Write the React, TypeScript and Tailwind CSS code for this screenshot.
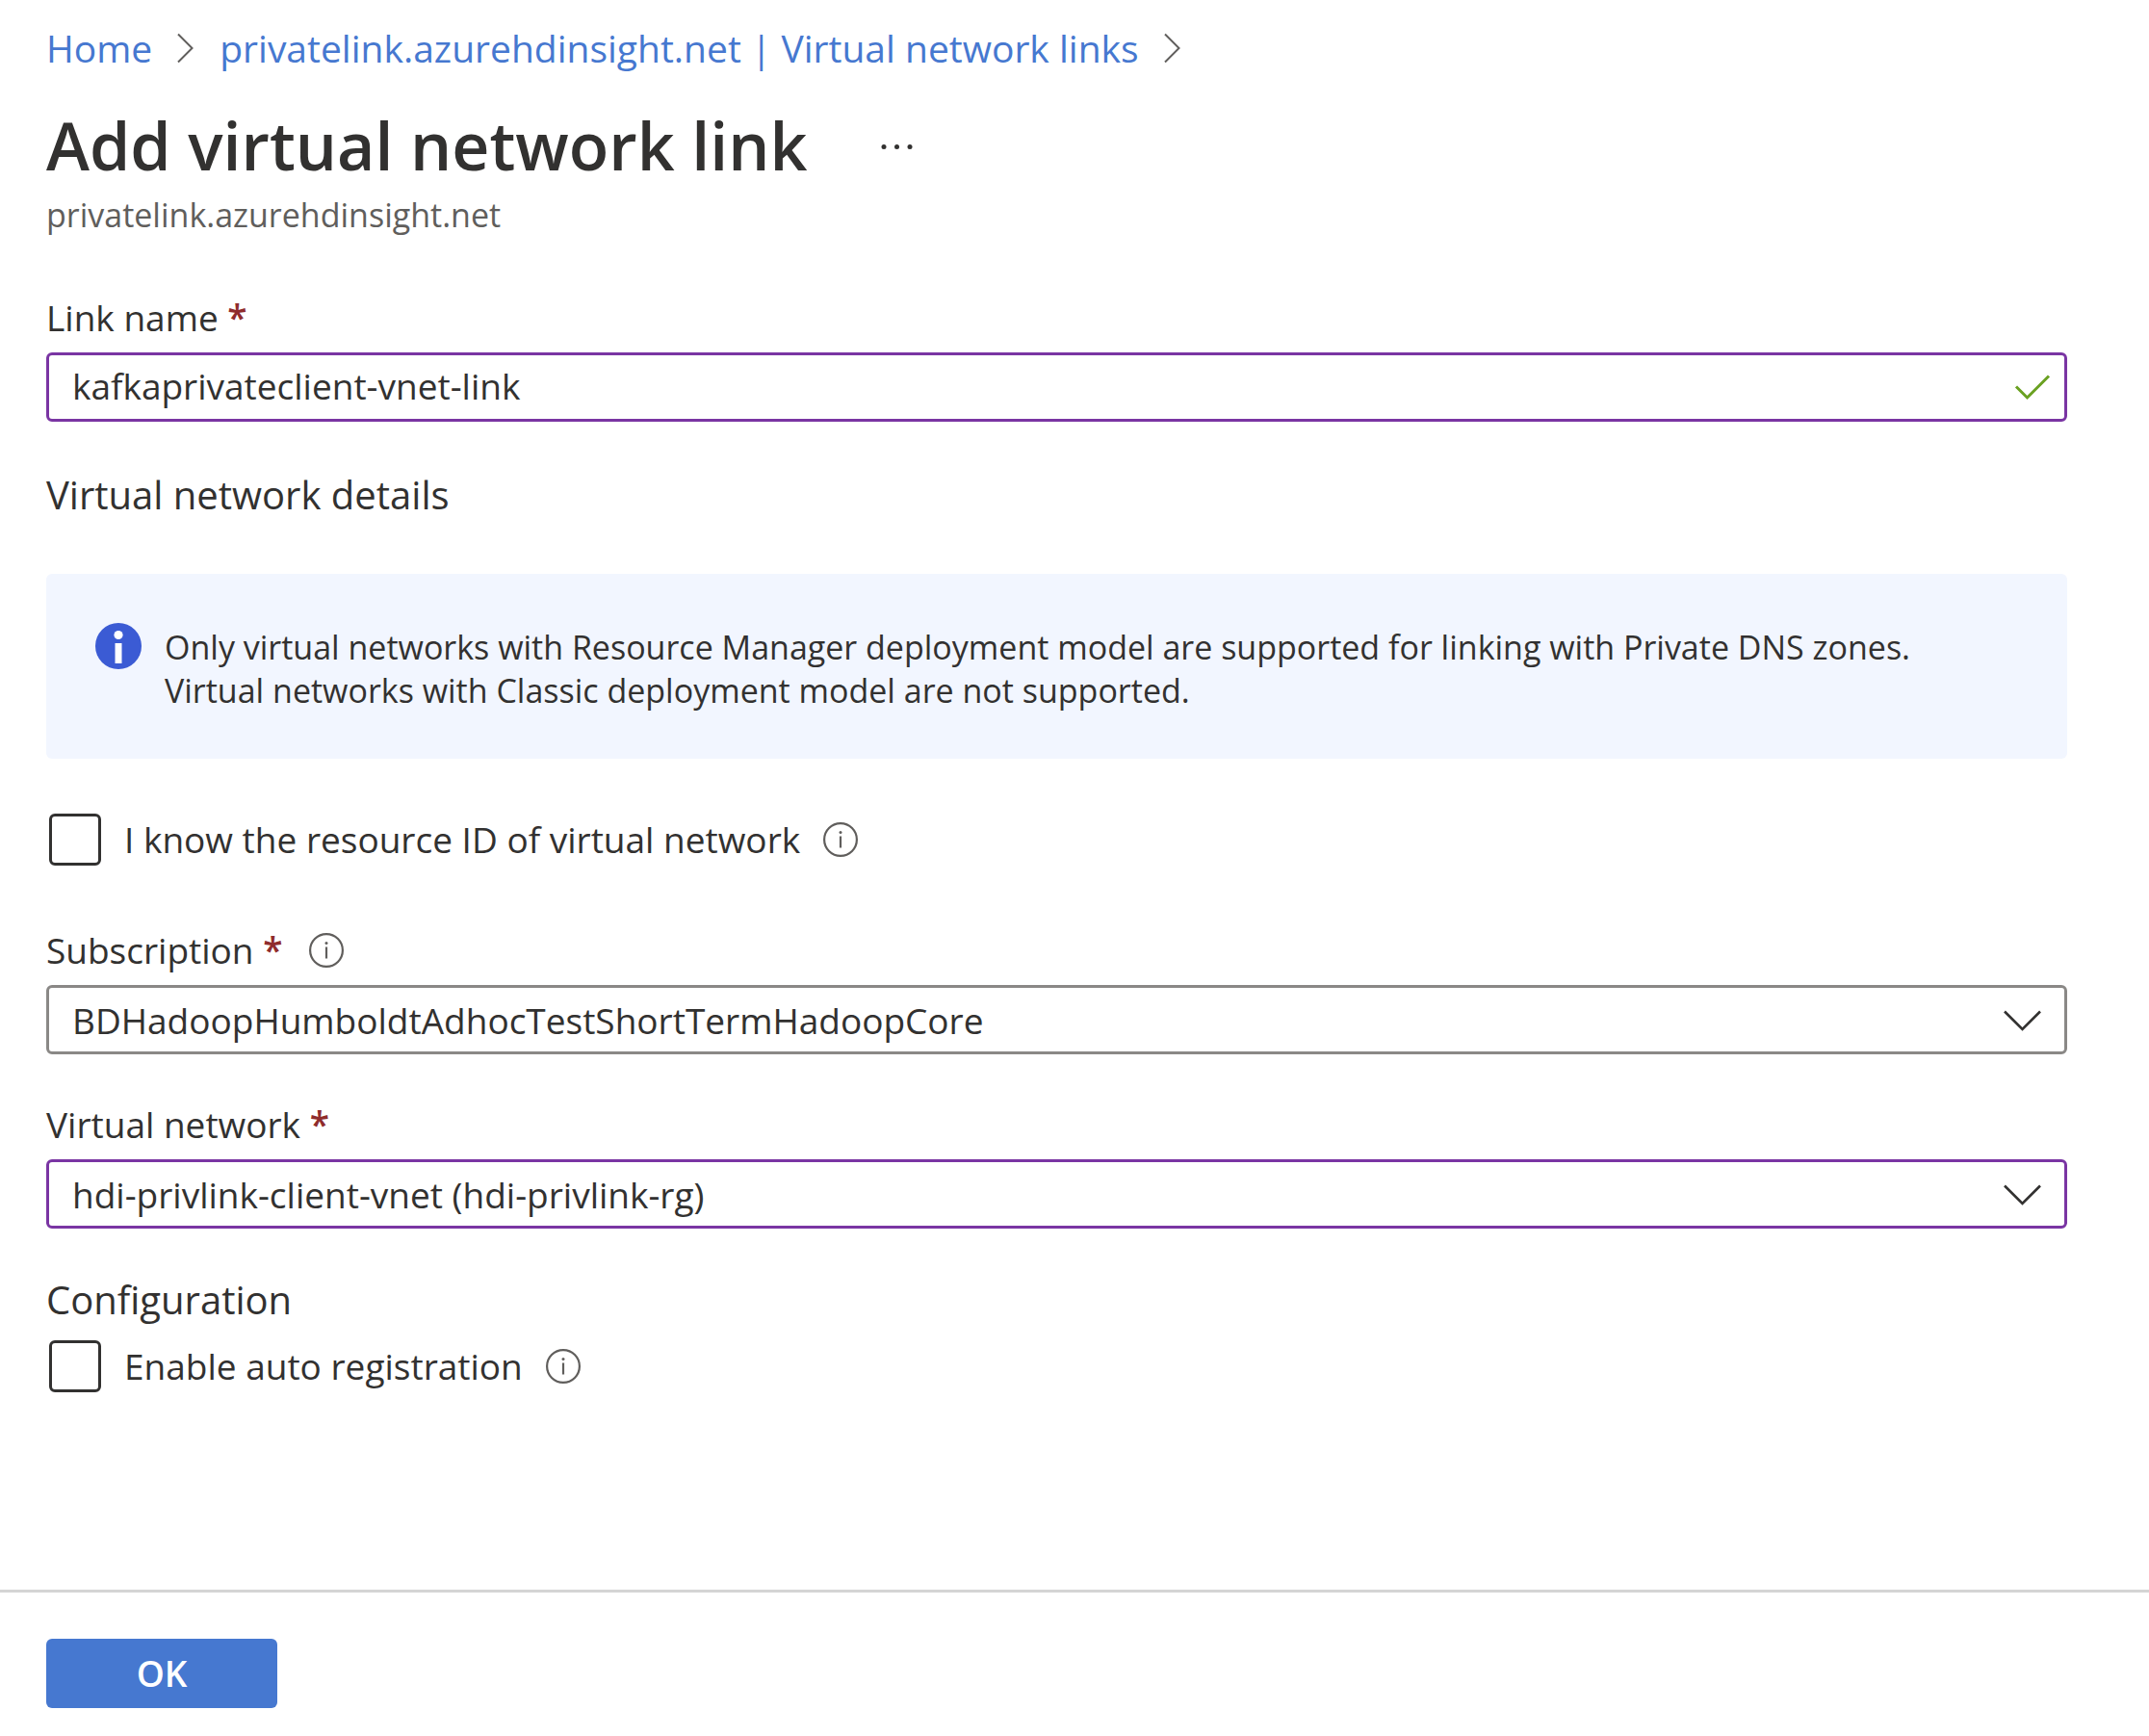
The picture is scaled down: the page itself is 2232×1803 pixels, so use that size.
import React, { useState } from "react";

function Crumb() {
    return (
        <svg className="w-[18px] h-8 shrink-0" viewBox="0 0 18 32" fill="none" stroke="#605e5c" strokeWidth="2">
            <path d="M1 1.5 15.5 16 1 30.5" />
        </svg>
    )
}

function InfoIcon() {
    return (
        <svg className="size-9 shrink-0" viewBox="0 0 36 36" fill="none">
            <circle cx="18" cy="18" r="16.9" stroke="#605e5c" strokeWidth="2.2" />
            <circle cx="18" cy="10.5" r="1.5" fill="#605e5c" />
            <path d="M18 14.5v12" stroke="#605e5c" strokeWidth="2.2" />
        </svg>
    )
}

function Required() {
    return <span className="text-[#8f2c2c] font-semibold">*</span>
}

type SelectFieldProps = {
    id: string;
    label: string;
    value: string;
    border: string;
    info?: boolean;
}

function SelectField({ id, label, value, border, info }: SelectFieldProps) {
    return (
        <div className="flex flex-col gap-3">
            <div className="flex items-center gap-7">
                <label htmlFor={id} className="text-[37px] leading-[48px]">{label} <Required /></label>
                {info && <InfoIcon />}
            </div>
            <div className="relative">
                <select id={id} className={`${border} block w-full h-[72px] appearance-none rounded-md border-3 bg-white pt-0.5 pl-6 pr-24 text-[37px]`}>
                    <option>{value}</option>
                </select>
                <svg className="absolute right-[27px] top-[26px] w-10 h-[22px] pointer-events-none" viewBox="0 0 40 22" fill="none" stroke="#323130" strokeWidth="2.6">
                    <path d="M2 1.5 20.5 20 39 1.5" />
                </svg>
            </div>
        </div>
    )
}

function CheckField({ id, label }: { id: string; label: string }) {
    const [ checked, setChecked ] = useState<boolean>(false);

    return (
        <div className="flex items-center pl-[3px]">
            <input
                id={id}
                type="checkbox"
                checked={checked}
                onChange={() => setChecked(!checked)}
                className="size-[54px] shrink-0 appearance-none rounded-md border-3 border-[#323130] bg-white checked:bg-[#4678d0]"
            />
            <label htmlFor={id} className="px-6 text-[37px] leading-[48px]">{label}</label>
            <InfoIcon />
        </div>
    )
}

export default function App() {
    const [ name, setName ] = useState<string>("kafkaprivateclient-vnet-link");

    return (
        <div className="min-h-screen flex flex-col bg-white text-[#323130] font-['Open_Sans','Noto_Sans',sans-serif]">
            <main className="flex-1 pl-12 pr-[85px] pt-[22px] pb-12">
                <nav className="flex items-center gap-[26px] text-[39px] leading-[56px] text-[#4678d0]">
                    <a href="#home">Home</a>
                    <Crumb />
                    <a href="#links">privatelink.azurehdinsight.net | Virtual network links</a>
                    <Crumb />
                </nav>

                <header className="mt-6">
                    <div className="flex items-center gap-19">
                        <h1 className="text-[68px] leading-[97px] font-semibold">Add virtual network link</h1>
                        <button aria-label="More actions">
                            <svg className="w-9 h-3" viewBox="0 0 36 12" fill="#323130">
                                <circle cx="4" cy="7.5" r="2.5" />
                                <circle cx="17.5" cy="7.5" r="2.5" />
                                <circle cx="31" cy="7.5" r="2.5" />
                            </svg>
                        </button>
                    </div>
                    <p className="text-[34px] leading-[48px] text-[#605e5c]">privatelink.azurehdinsight.net</p>
                </header>

                <div className="mt-[59px] flex flex-col gap-3">
                    <label htmlFor="link-name" className="text-[37px] leading-[48px]">Link name <Required /></label>
                    <div className="relative">
                        <input
                            id="link-name"
                            type="text"
                            value={name}
                            onChange={(e) => setName(e.target.value)}
                            className="block w-full h-[72px] rounded-md border-3 border-[#7a35a3] bg-white pb-1 pl-6 pr-20 text-[37px]"
                        />
                        <svg className="absolute right-4 top-[22px] w-10 h-7 pointer-events-none" viewBox="0 0 40 28" fill="none" stroke="#6aa121" strokeWidth="3">
                            <path d="M3 13.5 14.5 25 37 2.5" />
                        </svg>
                    </div>
                </div>

                <h2 className="mt-12 text-[40px] leading-[56px]">Virtual network details</h2>

                <div className="mt-[54px] flex items-start rounded-md bg-[#f2f6ff] pt-[51px] pb-12 pl-[51px] pr-12">
                    <svg className="size-12 shrink-0" viewBox="0 0 48 48">
                        <circle cx="24" cy="24" r="24" fill="#3b5bd4" />
                        <circle cx="24" cy="12.5" r="4.6" fill="#fff" />
                        <path d="M20.5 21h7v21h-7z" fill="#fff" />
                    </svg>
                    <p className="pt-[3px] pl-6 text-[34px] leading-[45px]">
                        Only virtual networks with Resource Manager deployment model are supported for linking with Private DNS zones.
                        <br />
                        Virtual networks with Classic deployment model are not supported.
                    </p>
                </div>

                <div className="mt-[57px]">
                    <CheckField id="know-id" label="I know the resource ID of virtual network" />
                </div>

                <div className="mt-16 flex flex-col gap-[49px]">
                    <SelectField id="subscription" label="Subscription" value="BDHadoopHumboldtAdhocTestShortTermHadoopCore" border="border-[#8a8886]" info />
                    <SelectField id="vnet" label="Virtual network" value="hdi-privlink-client-vnet (hdi-privlink-rg)" border="border-[#7a35a3]" />
                </div>

                <h2 className="mt-[46px] mb-3.5 text-[40px] leading-[56px]">Configuration</h2>
                <CheckField id="auto-registration" label="Enable auto registration" />
            </main>

            <footer className="border-t-3 border-[#d4d4d4] pl-12 pt-12 pb-[29px]">
                <button className="block w-60 h-[72px] rounded-md bg-[#4678d0] text-[37px] font-semibold text-white">OK</button>
            </footer>
        </div>
    )
}
